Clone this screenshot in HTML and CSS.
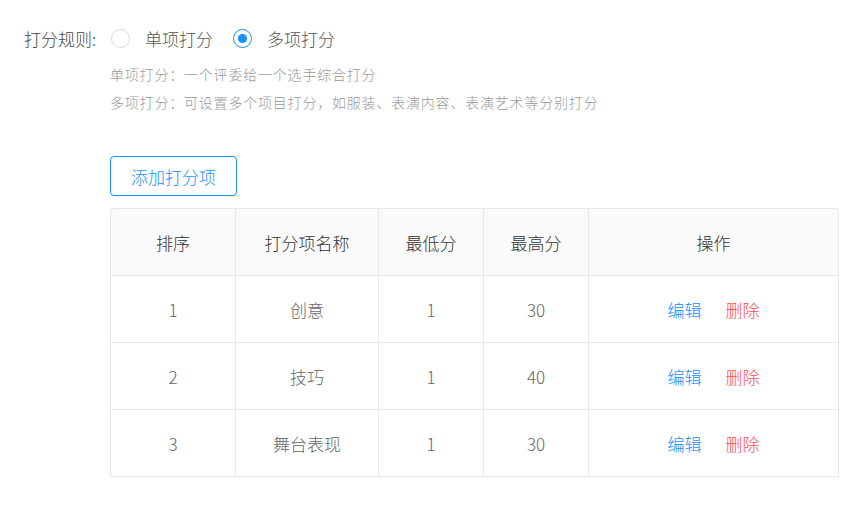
FILE: index.html
```html
<!DOCTYPE html>
<html lang="zh-CN">
<head>
    <meta charset="UTF-8">
    <title>打分规则</title>
    <link rel="stylesheet" href="styles.css">
</head>
<body>

    <div class="rule-row">
        <span class="rule-label">打分规则:</span>
        <label class="radio"><span class="radio-dot"></span>单项打分</label>
        <label class="radio checked"><span class="radio-dot"></span>多项打分</label>
    </div>

    <div class="tips">
        <p>单项打分：一个评委给一个选手综合打分</p>
        <p>多项打分：可设置多个项目打分，如服装、表演内容、表演艺术等分别打分</p>
    </div>

    <div class="score-box">
        <button class="add-btn">添加打分项</button>

        <table class="score-table">
            <thead>
                <tr>
                    <th class="col-sort">排序</th>
                    <th class="col-name">打分项名称</th>
                    <th class="col-min">最低分</th>
                    <th class="col-max">最高分</th>
                    <th>操作</th>
                </tr>
            </thead>
            <tbody>
                <tr>
                    <td>1</td>
                    <td>创意</td>
                    <td>1</td>
                    <td>30</td>
                    <td><a class="edit">编辑</a><a class="del">删除</a></td>
                </tr>
                <tr>
                    <td>2</td>
                    <td>技巧</td>
                    <td>1</td>
                    <td>40</td>
                    <td><a class="edit">编辑</a><a class="del">删除</a></td>
                </tr>
                <tr>
                    <td>3</td>
                    <td>舞台表现</td>
                    <td>1</td>
                    <td>30</td>
                    <td><a class="edit">编辑</a><a class="del">删除</a></td>
                </tr>
            </tbody>
        </table>
    </div>

</body>
</html>
```

FILE: styles.css
```css
body {
    margin: 0;
    padding: 0;
    font-family: "Noto Sans CJK SC", "Noto Sans", sans-serif;
    font-weight: 300;
    color: #333;
    background: #fff;
}

.rule-row {
    display: flex;
    align-items: center;
    height: 36px;
    margin-top: 20px;
    padding-left: 24px;
    font-size: 17px;
}

.rule-label {
    color: #444;
    width: 87px;
}

.radio {
    display: flex;
    align-items: center;
    color: #555;
    margin-right: 20px;
}

.radio-dot {
    width: 19px;
    height: 19px;
    border: 1px solid #d9d9d9;
    border-radius: 50%;
    margin-right: 15px;
    position: relative;
    box-sizing: border-box;
}

.radio.checked .radio-dot {
    border-color: #1890ff;
}

.radio.checked .radio-dot::after {
    content: "";
    position: absolute;
    left: 4px;
    top: 4px;
    width: 9px;
    height: 9px;
    border-radius: 50%;
    background: #1890ff;
}

.tips {
    padding-left: 110px;
    margin-top: 4px;
}

.tips p {
    margin: 0;
    font-size: 14px;
    letter-spacing: 0.8px;
    line-height: 28px;
    color: #999;
}

.score-box {
    padding-left: 110px;
    margin-top: 40px;
}

.add-btn {
    display: block;
    width: 127px;
    height: 40px;
    font-family: inherit;
    font-weight: 300;
    font-size: 17px;
    color: #1890ff;
    background: #fff;
    border: 1px solid #1890ff;
    border-radius: 4px;
    box-shadow: 0 2px 0 rgba(0, 0, 0, 0.015);
    cursor: pointer;
}

.score-table {
    margin-top: 12px;
    width: 729px;
    border-collapse: separate;
    border-spacing: 0;
    border: 1px solid #e8e8e8;
    border-right: none;
    border-bottom: none;
    border-radius: 4px 4px 0 0;
    font-size: 17px;
    text-align: center;
}

.score-table th,
.score-table td {
    height: 66px;
    padding: 0;
    border-right: 1px solid #e8e8e8;
    border-bottom: 1px solid #e8e8e8;
}

.score-table th {
    background: #fafafa;
    color: #333;
    font-weight: 300;
}

.score-table th:last-child {
    border-top-right-radius: 4px;
}

.score-table th:first-child {
    border-top-left-radius: 4px;
}

.score-table td {
    color: #666;
}

.col-sort { width: 124px; }
.col-name { width: 142px; }
.col-min { width: 104px; }
.col-max { width: 104px; }

.edit, .del {
    cursor: pointer;
    margin: 0 12px;
}

.edit {
    color: #1890ff;
}

.del {
    color: #ff4d4f;
}
```
